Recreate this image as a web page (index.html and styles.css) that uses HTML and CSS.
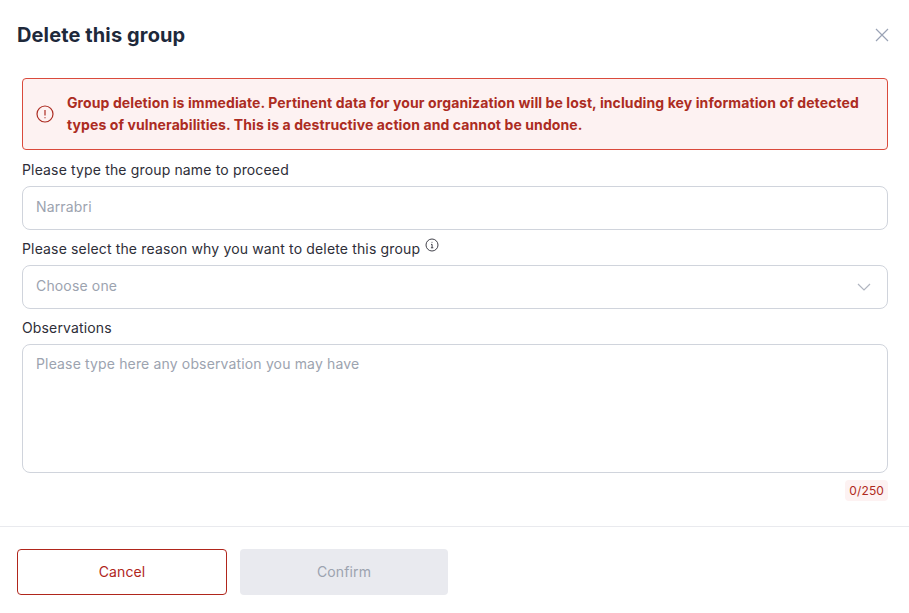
FILE: index.html
```html
<!DOCTYPE html>
<html lang="en">
<head>
    <meta charset="UTF-8">
    <meta name="viewport" content="width=device-width, initial-scale=1.0">
    <title>Delete this group</title>
    <link rel="stylesheet" href="styles.css">
</head>
<body>
    <div class="modal">
        <div class="modal-header">
            <h1>Delete this group</h1>
            <button class="close-btn" aria-label="Close">
                <svg width="14" height="14" viewBox="0 0 14 14"><path d="M1 1l12 12M13 1L1 13"/></svg>
            </button>
        </div>

        <div class="modal-body">
            <div class="alert">
                <svg class="alert-icon" width="18" height="18" viewBox="0 0 18 18">
                    <circle cx="9" cy="9" r="8"/>
                    <path d="M9 5v5.5M9 12.2v1"/>
                </svg>
                <p>Group deletion is immediate. Pertinent data for your organization will be lost, including key information of detected types of vulnerabilities. This is a destructive action and cannot be undone.</p>
            </div>

            <label class="field-label">Please type the group name to proceed</label>
            <div class="input">Narrabri</div>

            <label class="field-label">Please select the reason why you want to delete this group
                <svg class="info-icon" width="14" height="14" viewBox="0 0 14 14">
                    <circle cx="7" cy="7" r="6"/>
                    <path d="M6 6.4h1.1v3.4M5.9 9.8h2.4M7 3.9v.8"/>
                </svg>
            </label>
            <div class="input select">
                Choose one
                <svg width="14" height="8" viewBox="0 0 14 8"><path d="M1 1l6 6 6-6"/></svg>
            </div>

            <label class="field-label">Observations</label>
            <div class="input textarea">Please type here any observation you may have</div>
            <div class="counter-row"><span class="counter">0/250</span></div>
        </div>

        <div class="modal-footer">
            <button class="btn btn-cancel">Cancel</button>
            <button class="btn btn-confirm">Confirm</button>
        </div>
    </div>
</body>
</html>
```

FILE: styles.css
```css
* {
    box-sizing: border-box;
}

body {
    margin: 0;
    background: #fff;
    font-family: Inter, Roboto, "Liberation Sans", sans-serif;
    color: #2e2e38;
}

.modal {
    width: 909px;
    height: 613px;
}

.modal-header {
    display: flex;
    justify-content: space-between;
    align-items: center;
    height: 71px;
    padding: 0 20px 1px 17px;
}

.modal-header h1 {
    margin: 0;
    font-size: 20px;
    font-weight: 700;
    letter-spacing: 0.12px;
    color: #1e293b;
}

.close-btn {
    display: flex;
    padding: 0;
    border: none;
    background: none;
}

.close-btn path {
    fill: none;
    stroke: #9aa3b5;
    stroke-width: 1.2;
}

.modal-body {
    padding: 7px 21px 0 22px;
}

.alert {
    display: flex;
    align-items: center;
    gap: 13px;
    height: 72px;
    margin-bottom: 1px;
    padding: 0 14px 0 13px;
    border: 1px solid #da4a3c;
    border-radius: 4px;
    background: #fdf2f2;
}

.alert p {
    margin: 0;
    font-size: 14px;
    font-weight: 700;
    line-height: 22px;
    letter-spacing: 0.1px;
    color: #ac2c22;
}

.alert-icon {
    flex: none;
}

.alert-icon circle,
.alert-icon path {
    fill: none;
    stroke: #ac2c22;
    stroke-width: 1.2;
}

.field-label {
    display: block;
    height: 35px;
    padding-top: 10px;
    font-size: 14px;
    line-height: 18px;
    letter-spacing: 0.15px;
    color: #2e2e38;
}

.info-icon {
    position: relative;
    top: -2px;
    margin-left: 1px;
}

.info-icon circle,
.info-icon path {
    fill: none;
    stroke: #2e2e38;
    stroke-width: 0.9;
}

.input {
    display: flex;
    justify-content: space-between;
    align-items: center;
    height: 44px;
    padding: 0 16px 4px 13px;
    border: 1px solid #d0d4dc;
    border-radius: 8px;
    background: #fff;
    font-size: 14px;
    letter-spacing: 0.15px;
    color: #9ca3af;
}

.select svg {
    margin-top: 4px;
}

.select path {
    fill: none;
    stroke: #b0b5c0;
    stroke-width: 1.2;
}

.textarea {
    align-items: flex-start;
    height: 129px;
    padding-top: 10px;
    line-height: 18px;
}

.counter-row {
    display: flex;
    justify-content: flex-end;
    margin-top: 7px;
}

.counter {
    padding: 2px 4px;
    border-radius: 4px;
    background: #fdf2f2;
    font-size: 12px;
    line-height: 17px;
    letter-spacing: 0.12px;
    color: #b02a20;
}

.modal-footer {
    display: flex;
    gap: 13px;
    margin-top: 25px;
    padding: 22px 17px 0;
    border-top: 1px solid #e9eaee;
}

.btn {
    width: 210px;
    height: 46px;
    padding-bottom: 3px;
    border-radius: 4px;
    font-family: inherit;
    font-size: 14px;
    letter-spacing: 0.12px;
}

.btn-cancel {
    border: 1px solid #b0261c;
    background: #fff;
    color: #b0261c;
}

.btn-confirm {
    width: 208px;
    border: none;
    background: #e9eaef;
    color: #9ca3af;
}
```
